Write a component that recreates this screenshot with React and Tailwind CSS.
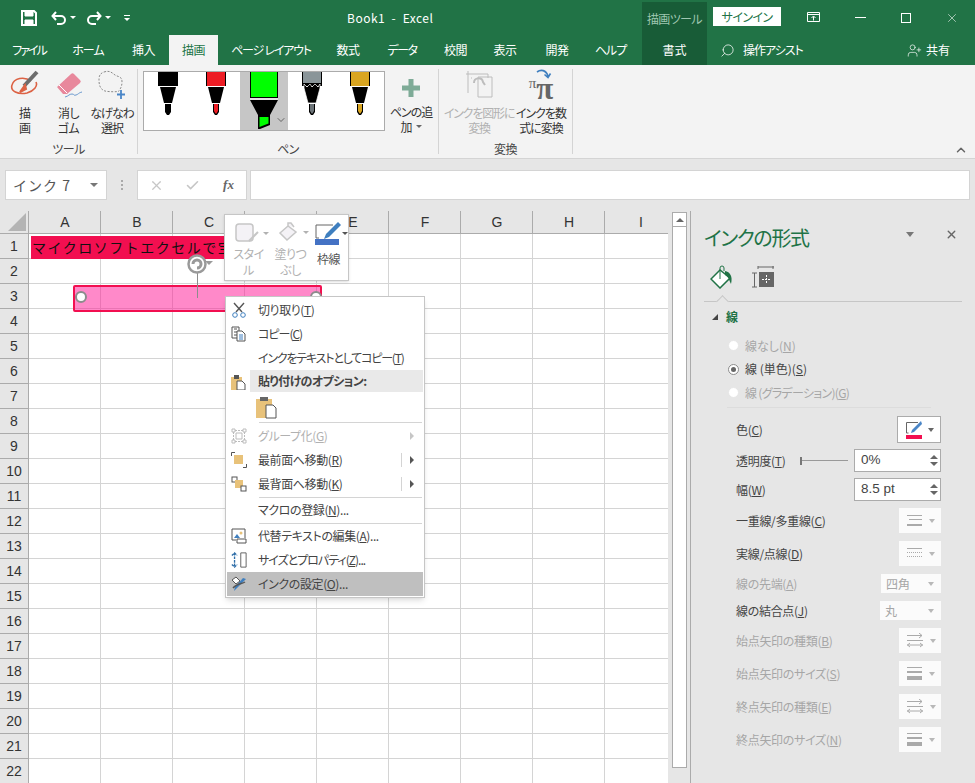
import React from 'react';
import { ChevronDown, ChevronUp, Search, UserPlus, X, Check } from 'lucide-react';

const cols = ['A', 'B', 'C', 'D', 'E', 'F', 'G', 'H', 'I'];
const rows = Array.from({ length: 22 }, (_, i) => i + 1);

const tabs = [
  ['ファイル', 'w-[58px] tracking-[-2px]'], ['ホーム', 'w-[60px] tracking-[-1px]'], ['挿入', 'w-[51px] tracking-[-0.5px]'], ['描画', 'w-[49px] tracking-[-0.5px] bg-[#f3f3f3] text-[#217346]'],
  ['ページ レイアウト', 'w-[106px] tracking-[-1.2px]'], ['数式', 'w-[48px] tracking-[-0.5px]'], ['データ', 'w-[60px] tracking-[-1.5px]'], ['校閲', 'w-[47px] tracking-[-0.5px]'],
  ['表示', 'w-[52px] tracking-[-0.5px]'], ['開発', 'w-[52px] tracking-[-0.5px]'], ['ヘルプ', 'w-[59px] pr-[4px] tracking-[-1px]'], ['書式', 'w-[65px] bg-[#185c37]'],
];

function Tri({ className = '' }) {
  return <span className={`inline-block w-0 h-0 border-x-[3px] border-x-transparent border-t-[3px] ${className}`} />;
}

function TitleBar() {
  return (
    <div className="h-[35px] flex bg-[#217346] text-white">
      <div className="w-[342px] flex items-center pl-[21px] gap-[10px]">
        <svg width="16" height="16" viewBox="0 0 16 16" fill="none" stroke="#fff" strokeWidth="2" className="mr-[4px]">
          <path d="M1 1h12l2 2v12H1z" /><path d="M4 1v5h8V1M4 15v-5h8v5" fill="#fff" strokeWidth="1" />
        </svg>
        <span className="flex items-center gap-[3px]">
          <svg width="16" height="14" viewBox="0 0 16 14" fill="none" stroke="#fff" strokeWidth="2">
            <path d="M2 5h8a4 4 0 0 1 0 8H6M5 1 1.500 5 5 9" />
          </svg>
          <Tri className="border-t-white" />
        </span>
        <span className="flex items-center gap-[3px]">
          <svg width="16" height="14" viewBox="0 0 16 14" fill="none" stroke="#fff" strokeWidth="2">
            <path d="M14 5H6a4 4 0 0 0 0 8h4M11 1l3.500 4L11 9" />
          </svg>
          <Tri className="border-t-white" />
        </span>
        <span className="flex flex-col items-center gap-[2px] ml-[3px]">
          <span className="w-[6px] h-px bg-white" /><Tri className="border-t-white" />
        </span>
      </div>
      <div className="w-[300px] flex items-center text-[12px] pl-[5px] tracking-[0.5px] whitespace-pre">Book1  -  Excel</div>
      <div className="w-[65px] mt-[2px] bg-[#185c37] text-[#9fc7b0] text-[12px] tracking-[-0.6px] flex items-center justify-center">描画ツール</div>
      <div className="w-[68px] h-[19px] mt-[7px] ml-[6px] bg-white text-[#217346] text-[12px] tracking-[-0.6px] flex items-center justify-center">サインイン</div>
      <div className="flex-1 flex items-center justify-end">
        <span className="w-[46px] flex justify-center">
          <svg width="14" height="11" viewBox="0 0 14 11" fill="none" stroke="#fff"><path d="M.5 .5h12v9H.5zM.5 2.500h12M6.500 8.500V4.500M4.500 6l2-2 2 2" /></svg>
        </span>
        <span className="w-[46px] flex justify-center"><span className="w-[11px] h-px bg-white" /></span>
        <span className="w-[46px] flex justify-center"><span className="w-[10px] h-[10px] border border-white" /></span>
        <span className="w-[46px] flex justify-center"><X size={14} strokeWidth={1} /></span>
      </div>
    </div>
  );
}

function TabBar() {
  return (
    <div className="h-[30px] flex bg-[#217346] text-white text-[12px]">
      {tabs.map(([label, cls]) => (
        <div key={label} className={`flex items-center justify-center whitespace-pre ${cls}`}>{label}</div>
      ))}
      <div className="flex items-center ml-[13px] gap-[8px]">
        <Search size={15} strokeWidth={1.2} className="-scale-x-100" />
        <span className="tracking-[-1px]">操作アシスト</span>
      </div>
      <div className="flex items-center ml-auto mr-[3px] gap-[4px] w-[65px]">
        <UserPlus size={15} strokeWidth={1.1} />
        <span>共有</span>
      </div>
    </div>
  );
}

function Pen({ body, tip, w = 18, selected, jag }) {
  return (
    <div className={`w-[48px] h-[58px] relative flex justify-center ${selected ? 'bg-[#c6c6c6]' : ''}`}>
      <svg width="30" height="58" viewBox="0 0 30 58">
        <rect x={15 - w / 2 - 1} y="0" width={w + 2} height="14" fill="#000" />
        <rect x={15 - w / 2} y="0" width={w} height={jag ? 11 : 14} fill={body} />
        {selected ? (
          <>
            <path d="M1 28h28l-8 15v2H9v-2z" fill="#000" />
            <path d="M1 27h28" stroke="#fff" />
            <rect x="1" y="0" width="28" height="26" fill="#000" />
            <rect x="2" y="0" width="26" height="25" fill={body} />
            <path d="M9 45h12v8l-10 4H9z" fill="#000" />
            <path d="M10.500 45h9v6.500l-9 3.500z" fill={tip} />
          </>
        ) : (
          <>
            {jag ? (
              <path d="M7 12l3 3 3-3 2 3 3-3 3 3 2-3v4l-4 15h-8L7 16z" fill="#000" stroke="#fff" strokeWidth=".7" />
            ) : (
              <>
                <path d="M6 14.500h18" stroke="#fff" />
                <path d="M7 15h16l-4 16h-8z" fill="#000" />
              </>
            )}
            <path d="M12 32h6v8l-2 3h-2l-2-3z" fill="#000" />
            <path d="M13 32h4v7l-1.500 2.500h-1L13 39z" fill={tip} />
          </>
        )}
      </svg>
      {selected && <ChevronDown size={12} strokeWidth={1.5} className="absolute right-[1px] bottom-[4px] text-[#444]" />}
    </div>
  );
}

function GroupLabel({ children }) {
  return <div className="h-[14px] text-center text-[12px] leading-[17px] text-[#444] tracking-[-0.5px]">{children}</div>;
}

function Ribbon() {
  return (
    <div className="h-[94px] bg-[#f3f3f3] border-b border-[#d4d4d4] flex text-[12px] leading-[15px] text-[#333]">
      <div className="w-[138px] border-r border-[#d4d4d4] my-[4px] flex flex-col">
        <div className="flex-1 flex text-center">
          <div className="w-[50px] flex flex-col items-center">
            <svg width="30" height="34" viewBox="0 0 30 34" fill="none">
              <path d="M21 12C14 7 4 9 2 16c-2 6 6 10 15 8 7-2 11-7 9-11" stroke="#dc6244" strokeWidth="1.600" />
              <path d="M27 3 14 17" stroke="#6c6c6c" strokeWidth="4" /><path d="M15 16l-5 7 6-3z" fill="#dc6244" stroke="#dc6244" strokeWidth="2" />
            </svg>
            <span className="mt-[2px]">描<br />画</span>
          </div>
          <div className="w-[37px] flex flex-col items-center">
            <svg width="30" height="34" viewBox="0 0 30 34" fill="none">
              <path d="M3 18 17 5a2 2 0 0 1 3 0l6 6a2 2 0 0 1 0 3L13 25H9z" fill="#e8889c" />
              <path d="M5 16l8 8" stroke="#fff" /><path d="M11 28c4-1 4-3 7-3s1 2 4 1 2-2 6-3" stroke="#5b8ec9" strokeWidth=".9" />
            </svg>
            <span className="mt-[2px] tracking-[-0.5px]">消し<br />ゴム</span>
          </div>
          <div className="w-[50px] flex flex-col items-center">
            <svg width="30" height="34" viewBox="0 0 30 34" fill="none">
              <path d="M7 3c6-2 8 1 11 3s7 1 7 7-3 8-3 9-10 1-14 0C2 20 2 14 2 10s2-6 5-7z" stroke="#8a8a8a" strokeDasharray="2 1.500" />
              <path d="M24 21v9M20 25.500h8" stroke="#4a86c7" strokeWidth="1.800" />
            </svg>
            <span className="mt-[2px] whitespace-nowrap tracking-[-1px]">なげなわ<br />選択</span>
          </div>
        </div>
        <GroupLabel>ツール</GroupLabel>
      </div>
      <div className="w-[301px] border-r border-[#d4d4d4] my-[4px] flex flex-col">
        <div className="flex-1 flex">
          <div className="w-[242px] h-[60px] ml-[5px] mt-[2px] border border-[#ababab] bg-white flex">
            <Pen body="#000" tip="#000" />
            <Pen body="#ed1c24" tip="#ed1c24" />
            <Pen body="#00ff00" tip="#00ff00" selected />
            <Pen body="#8a9599" tip="#6c7478" jag />
            <Pen body="#d9a520" tip="#d9a520" />
          </div>
          <div className="w-[46px] ml-[3px] flex flex-col items-center text-center">
            <svg width="18" height="18" viewBox="0 0 18 18" className="mt-[10px] mb-[7px]">
              <path d="M6.500 0h5v6.500H18v5h-6.500V18h-5v-6.500H0v-5h6.500z" fill="#7eab97" />
            </svg>
            <span className="whitespace-nowrap tracking-[-1px]">ペンの追</span>
            <span className="flex items-center gap-[3px]">加<Tri className="border-t-[#666]" /></span>
          </div>
        </div>
        <GroupLabel>ペン</GroupLabel>
      </div>
      <div className="w-[134px] border-r border-[#d4d4d4] my-[4px] flex flex-col">
        <div className="flex-1 flex text-center">
          <div className="w-[80px] flex flex-col items-center text-[#b1b1b1]">
            <svg width="30" height="34" viewBox="0 0 30 34" fill="none" stroke="#bdbdbd">
              <path d="M2 5h22v4M4 2v22M8 9h-1M14 8h14v20H14z" />
              <path d="M10 14c0-6 8-6 9-1l2 3" strokeWidth="2" />
            </svg>
            <span className="mt-[2px] whitespace-nowrap tracking-[-1.200px]">インクを図形に<br />変換</span>
          </div>
          <div className="w-[44px] flex flex-col items-center">
            <div className="h-[34px] flex items-end text-[#666] font-['Liberation_Serif',serif] leading-none relative">
              <span className="text-[15px] mb-[12px]">π</span><span className="text-[31px] font-bold -mb-[1px]">π</span>
              <svg width="16" height="10" viewBox="0 0 16 10" fill="none" stroke="#3f7fbf" strokeWidth="1.600" className="absolute top-0 right-[1px]">
                <path d="M1 3c4-3 9-2 11 4M8.500 5.500 12 8.500l2.500-4" />
              </svg>
            </div>
            <span className="mt-[2px] whitespace-nowrap tracking-[-1px]">インクを数<br />式に変換</span>
          </div>
        </div>
        <GroupLabel>変換</GroupLabel>
      </div>
      <div className="flex-1 flex items-end justify-end pb-[1px] pr-[7px]">
        <ChevronUp size={14} strokeWidth={2.5} className="text-[#666]" />
      </div>
    </div>
  );
}

function FormulaBar() {
  return (
    <div className="h-[52px] bg-[#e6e6e6] flex pt-[11px] pl-[5px] pr-[5px]">
      <div className="w-[102px] h-[30px] bg-white border border-[#d4d4d4] flex items-center pl-[7px] pr-[8px] text-[14px] tracking-[1px] text-[#555] [font-feature-settings:normal]">
        <span className="flex-1">インク 7</span><Tri className="border-x-[4px] border-t-[4px] border-t-[#777]" />
      </div>
      <div className="w-[30px] h-[30px] flex items-center justify-center">
        <span className="flex flex-col gap-[2px]">
          <span className="w-[2px] h-[2px] bg-[#aaa]" /><span className="w-[2px] h-[2px] bg-[#aaa]" /><span className="w-[2px] h-[2px] bg-[#aaa]" />
        </span>
      </div>
      <div className="w-[110px] h-[30px] bg-white border border-[#d4d4d4] flex items-center">
        <span className="w-[36px] flex justify-center"><X size={15} strokeWidth={2} className="text-[#c6c6c6]" /></span>
        <span className="w-[37px] flex justify-center"><Check size={15} strokeWidth={2.500} className="text-[#c6c6c6]" /></span>
        <span className="w-[35px] text-center text-[13px] italic font-bold text-[#666] font-['Liberation_Serif',serif]">fx</span>
      </div>
      <div className="flex-1 h-[30px] ml-[3px] bg-white border border-[#d4d4d4]" />
    </div>
  );
}

function Sheet() {
  return (
    <div className="w-[668px] h-full overflow-hidden bg-white text-[14px] text-[#333] font-['Liberation_Sans','Noto_Sans_CJK_JP',sans-serif]">
      <div className="flex h-[23px] bg-[#e6e6e6] border-b border-[#ababab]">
        <div className="w-[29px] shrink-0 border-r border-[#ababab] flex items-end justify-end p-[2px]">
          <svg width="18" height="18" viewBox="0 0 18 18"><path d="M18 0v18H0z" fill="#b4b4b4" /></svg>
        </div>
        {cols.map(c => (
          <div key={c} className="w-[72px] shrink-0 border-r border-[#ababab] flex items-center justify-center pl-[1px]">{c}</div>
        ))}
      </div>
      {rows.map(r => (
        <div key={r} className="flex h-[25px]">
          <div className="w-[29px] shrink-0 bg-[#e6e6e6] border-r border-b border-[#ababab] flex items-center justify-center">{r}</div>
          {cols.map(c => <div key={c} className="w-[72px] shrink-0 border-r border-b border-[#d4d4d4]" />)}
        </div>
      ))}
    </div>
  );
}

function InkShapes() {
  return (
    <>
      <div className="absolute left-[31px] top-[25px] w-[215px] h-[23px] bg-[#f20f50] text-[14px] leading-[22px] tracking-[1.500px] whitespace-nowrap text-[#111] pl-[1px] [font-feature-settings:normal]">
        マイクロソフトエクセルで宝
      </div>
      <div className="absolute left-[73px] top-[74px] w-[249px] h-[27px] bg-[#ff1493]/50 border-2 border-[#f20f50] rounded-[2px]" />
      <div className="absolute left-[75px] top-[80px] w-[12px] h-[12px] rounded-full bg-white border-2 border-[#8c8c8c]" />
      <div className="absolute left-[310px] top-[80px] w-[12px] h-[12px] rounded-full bg-white border-2 border-[#8c8c8c]" />
      <div className="absolute left-[197px] top-[62px] w-px h-[25px] bg-[#8c8c8c]" />
      <svg className="absolute left-[187px] top-[43px]" width="27" height="20" viewBox="0 0 27 20" fill="none" stroke="#9a9a9a" strokeWidth="2.500">
        <circle cx="10" cy="10" r="8.500" fill="#fff" /><path d="M6 10a4 4 0 1 1 4 4" strokeWidth="3" />
        <path d="M18 7l4 4 4-4" fill="#9a9a9a" stroke="none" />
      </svg>
    </>
  );
}

function MiniToolbar() {
  return (
    <div className="absolute left-[224px] top-[3px] w-[125px] h-[67px] bg-white border border-[#c6c6c6] shadow-sm flex text-[12px] leading-[16px] text-center tracking-[-0.5px]">
      <div className="w-[50px] flex flex-col items-center pt-[8px] text-[#b1b1b1]">
        <span className="flex items-center gap-[1px] ml-[6px]">
          <svg width="27" height="20" viewBox="0 0 27 20" fill="#f4f2f6" stroke="#c6c6c6"><rect x="1" y="1" width="17" height="17" rx="3" strokeWidth="1.500" /><path d="M14 18l9-9" strokeWidth="2" /></svg>
          <Tri className="border-t-[#b1b1b1]" />
        </span>
        <span className="mt-[3px]">スタイ<br />ル</span>
      </div>
      <div className="w-[37px] flex flex-col items-center pt-[6px] text-[#b1b1b1]">
        <span className="flex items-center gap-[1px] ml-[6px]">
          <svg width="24" height="22" viewBox="0 0 24 22" fill="#f4f2f6" stroke="#c6c6c6" strokeWidth="1.500"><path d="M10 5 2 12l7 7 9-8zM10 5V2h3l3 4" /></svg>
          <Tri className="border-t-[#b1b1b1]" />
        </span>
        <span className="mt-[3px] whitespace-nowrap">塗りつ<br />ぶし</span>
      </div>
      <div className="flex-1 flex flex-col items-center pt-[6px] text-[#555]">
        <span className="flex items-center gap-[1px] ml-[6px]">
          <svg width="26" height="24" viewBox="0 0 26 24" fill="none">
            <path d="M1 17V4h17M1 17h3" stroke="#666" /><path d="M23 1 11 13l-2 5 5-2L26 4z" fill="#3f7fbf" />
            <rect x="0" y="18" width="24" height="6" fill="#4472c4" />
          </svg>
          <Tri className="border-t-[#555]" />
        </span>
        <span className="mt-[6px]">枠線</span>
      </div>
    </div>
  );
}

const ic = { fill: 'none', width: 16, height: 16, viewBox: '0 0 16 16' };

function MenuIcon({ name }) {
  switch (name) {
    case 'cut':
      return <svg {...ic} stroke="#555"><path d="M3 1l8 9M13 1 5 10" strokeWidth="1.400" /><circle cx="4" cy="13" r="2.300" stroke="#3f7fbf" /><circle cx="12" cy="13" r="2.300" stroke="#3f7fbf" /></svg>;
    case 'copy':
      return <svg {...ic} stroke="#555"><path d="M1 1h7v11H1z" /><path d="M3 3h3M3 6h3M3 9h3M6 5h5l3 3v7H6z" fill="#fff" /><path d="M8 9h4M8 11h4M8 13h4" stroke="#3f7fbf" /></svg>;
    case 'paste':
      return <svg {...ic}><path d="M1 3h11v13H1z" fill="#e8c27a" /><path d="M4 1h5v4H4z" fill="#555" /><path d="M7 7h5l3 3v6H7z" fill="#fff" stroke="#555" /></svg>;
    case 'group':
      return <svg {...ic} stroke="#bcbcbc"><path d="M1 1h3v3H1zM12 1h3v3h-3zM1 12h3v3H1zM12 12h3v3h-3zM5 5h6v6H5z" /><path d="M4 2.500h8M4 13.500h8M2.500 4v8M13.500 4v8" strokeDasharray="2 1" /></svg>;
    case 'front':
      return <svg {...ic}><rect x="3" y="3" width="9" height="9" fill="#e8c27a" /><path d="M.5 4V.5H4M15.500 12v3.500H12" stroke="#555" /></svg>;
    case 'back':
      return <svg {...ic}><rect x="1" y="1" width="5" height="5" fill="#fff" stroke="#555" /><rect x="4" y="4" width="8" height="8" fill="#e8c27a" /><rect x="10" y="10" width="5" height="5" fill="#fff" stroke="#555" /></svg>;
    case 'alt':
      return <svg {...ic} stroke="#555"><path d="M1 1h13v9" /><path d="M1 1v11h4" /><path d="M3 10l3-4 3 4z" fill="#3f7fbf" stroke="none" /><circle cx="10" cy="5" r="1.500" fill="#e8c27a" stroke="none" /><path d="M6 11h9v4H6z" fill="#fff" /></svg>;
    case 'size':
      return <svg {...ic} viewBox="0 0 18 18" width="16" height="16"><path d="M4 1v16M1 4l3-3 3 3M1 14l3 3 3-3" stroke="#2f6ea8" strokeWidth="1.500" strokeDasharray="3 1" /><path d="M11 1h6v16h-6z" stroke="#555" /></svg>;
    case 'ink':
      return <svg {...ic}><path d="M1 4l4-3 4 4-4 3z" fill="#fff" stroke="#555" /><path d="M15 3 6 12l-3 3 1-4 8-9z" fill="#3f7fbf" /><path d="M2 12c4-5 9-4 12-6" stroke="#555" strokeWidth="1.500" /></svg>;
    default:
      return null;
  }
}

function MenuItem({ icon, children, disabled, active, arrow, split, tight }) {
  return (
    <div className={`h-[24px] flex items-center ${active ? 'bg-[#bfbfbf] mx-px' : ''} ${disabled ? 'text-[#b1b1b1]' : 'text-[#444]'}`}>
      <span className={`w-[25px] mr-[7px] flex justify-center shrink-0 ${active ? '-ml-px' : ''}`}>{icon && <MenuIcon name={icon} />}</span>
      <span className={`flex-1 whitespace-nowrap ${tight || 'tracking-[-0.4px]'}`}>{children}</span>
      {split && <span className="w-px h-[14px] bg-[#d4d4d4] mr-[8px]" />}
      {arrow && <span className={`w-0 h-0 mr-[10px] border-y-[4px] border-y-transparent border-l-[4px] ${disabled ? 'border-l-[#c6c6c6]' : 'border-l-[#555]'}`} />}
    </div>
  );
}

function Sep({ className = 'my-[0.5px]' }) {
  return <div className={`h-px ml-[33px] mr-[2px] bg-[#d4d4d4] ${className}`} />;
}

function ContextMenu() {
  return (
    <div className="absolute left-[225px] top-[85px] w-[200px] h-[302px] py-[1px] bg-white border border-[#c6c6c6] shadow-md text-[12px]">
      <MenuItem icon="cut">切り取り(<u>T</u>)</MenuItem>
      <MenuItem icon="copy" tight="tracking-[-1px]">コピー(<u>C</u>)</MenuItem>
      <MenuItem tight="tracking-[-1.200px]">インクをテキストとしてコピー(<u>T</u>)</MenuItem>
      <div className="h-[22px] flex items-center">
        <span className="w-[24px] flex justify-center shrink-0 mt-[1px]"><MenuIcon name="paste" /></span>
        <span className="flex-1 h-full mr-px pl-[8px] bg-[#e9e9e9] flex items-center font-bold text-[#444] tracking-[-0.6px]">貼り付けのオプション:</span>
      </div>
      <div className="h-[29px] pl-[30px] flex items-center">
        <svg width="21" height="24" viewBox="0 0 21 24" fill="none">
          <path d="M0 4h16v19H0z" fill="#e8c27a" /><path d="M4 2h8v4H4z" fill="#666" /><path d="M10 10h7l3 3v10H10z" fill="#fff" stroke="#555" />
        </svg>
      </div>
      <Sep className="my-[1px]" />
      <MenuItem icon="group" disabled arrow>グループ化(<u>G</u>)</MenuItem>
      <MenuItem icon="front" arrow split>最前面へ移動(<u>R</u>)</MenuItem>
      <MenuItem icon="back" arrow split>最背面へ移動(<u>K</u>)</MenuItem>
      <Sep />
      <MenuItem>マクロの登録(<u>N</u>)...</MenuItem>
      <Sep />
      <MenuItem icon="alt">代替テキストの編集(<u>A</u>)...</MenuItem>
      <MenuItem icon="size" tight="tracking-[-1px]">サイズとプロパティ(<u>Z</u>)...</MenuItem>
      <MenuItem icon="ink" active>インクの設定(<u>O</u>)...</MenuItem>
    </div>
  );
}

function Scrollbar() {
  return (
    <div className="w-[22px] shrink-0 bg-[#e6e6e6] flex flex-col pl-[4px] pr-[3px] pt-px">
      <div className="h-[15px] bg-white border border-[#ababab] flex items-center justify-center">
        <span className="w-0 h-0 border-x-[4px] border-x-transparent border-b-[4px] border-b-[#666]" />
      </div>
      <div className="h-[542px] -mt-px bg-white border border-[#ababab]" />
    </div>
  );
}

function Radio({ checked, disabled, children, tight = '' }) {
  return (
    <div className={`h-[23.500px] flex items-center ${disabled ? 'text-[#a6a6a6]' : 'text-[#444]'}`}>
      <span className={`w-[11px] h-[11px] rounded-full bg-white border mr-[6px] flex items-center justify-center ${disabled ? 'border-[#e6e6e6]' : 'border-[#8c8c8c]'}`}>
        {checked && <span className="w-[5px] h-[5px] rounded-full bg-[#666]" />}
      </span>
      <span className={tight}>{children}</span>
    </div>
  );
}

function Spin({ value }) {
  return (
    <div className="w-[87px] h-[23px] bg-white border border-[#ababab] flex items-center pl-[6px] pr-[2px] text-[#444] text-[13.5px] font-['Liberation_Sans',sans-serif]">
      <span className="flex-1">{value}</span>
      <span className="flex flex-col gap-[3px]">
        <span className="w-0 h-0 border-x-[4px] border-x-transparent border-b-[4px] border-b-[#666]" />
        <span className="w-0 h-0 border-x-[4px] border-x-transparent border-t-[4px] border-t-[#666]" />
      </span>
    </div>
  );
}

function LineGlyph({ type }) {
  if (type === 'compound') {
    return <svg width="15" height="12" viewBox="0 0 15 12" fill="#aaa"><rect y="0" width="15" height="1" /><rect y="4" x="2" width="13" height="1" /><rect y="9" width="15" height="2" /></svg>;
  }
  if (type === 'dash') {
    return <svg width="15" height="12" viewBox="0 0 15 12" stroke="#aaa" strokeWidth="1"><path d="M0 .5h15" /><path d="M0 4.500h15M0 8.500h15" strokeDasharray="1 1" /></svg>;
  }
  if (type === 'arrow') {
    return <svg width="16" height="15" viewBox="0 0 16 15" fill="none" stroke="#aaa"><path d="M0 2.500h15M12 0l3 2.500L12 5M0 7.500h16M0 12h16M3 10 .5 12 3 14M13 10l2.500 2-2.500 2" /></svg>;
  }
  return <svg width="15" height="13" viewBox="0 0 15 13" fill="#aaa"><rect width="15" height="1" /><rect y="4" width="15" height="2" /><rect y="9" width="15" height="4" /></svg>;
}

function IconDrop({ type }) {
  return (
    <div className="w-[42px] h-[25px] bg-[#fbfbfb] flex items-center pl-[8px] gap-[7px]">
      <LineGlyph type={type} />
      <Tri className="border-x-[3.500px] border-t-[4px] border-t-[#b8b8b8]" />
    </div>
  );
}

function TextDrop({ value, w }) {
  return (
    <div className={`h-[19px] bg-[#fbfbfb] flex items-center pl-[5px] pr-[7px] text-[#a6a6a6] ${w}`}>
      <span className="flex-1">{value}</span>
      <Tri className="border-x-[3.500px] border-t-[4px] border-t-[#b8b8b8]" />
    </div>
  );
}

function PanelRow({ label, dim, children, h, mt }) {
  return (
    <div className={`flex items-center justify-between ${h} ${mt} ${dim ? 'text-[#a6a6a6]' : 'text-[#444]'}`}>
      <span className="whitespace-nowrap tracking-[-0.3px]">{label}</span>
      {children}
    </div>
  );
}

function FormatPanel() {
  return (
    <div className="flex-1 border-l border-[#ababab] bg-[#e6e6e6] text-[12px] flex flex-col">
      <div className="h-[49px] pt-[5px] pl-[13px] pr-[17px] flex items-center justify-between text-[#217346]">
        <span className="text-[20px] tracking-[-1.300px]">インクの形式</span>
        <span className="flex items-center gap-[31px] text-[#666] -mt-[7px]">
          <Tri className="border-x-[4.500px] border-t-[5px] border-t-[#777]" />
          <X size={13} strokeWidth={2.500} />
        </span>
      </div>
      <div className="h-[33px] pl-[19px] flex items-center gap-[18px]">
        <svg width="24" height="24" viewBox="0 0 24 24" fill="none">
          <path d="M10 5 1 14l9 9 10-10z" fill="#fff" stroke="#217346" strokeWidth="1.500" />
          <path d="M10 14V3a2 2 0 0 1 4 0v3" stroke="#217346" /><path d="M15 6c5 1 8 5 6 13-2-4-2-7-6-9z" fill="#217346" />
        </svg>
        <svg width="22" height="22" viewBox="0 0 22 22" fill="none">
          <path d="M6 1h16M6 0v3M21 0v3M0 7h5M0 21h5M2.500 7v14" stroke="#666" />
          <rect x="7" y="6" width="15" height="15" fill="#666" />
          <path d="M14.500 9v9M10 13.500h9" stroke="#fff" strokeDasharray="2 1" />
        </svg>
      </div>
      <div className="relative h-[9px] mx-[13px] border-b border-[#c6c6c6]">
        <span className="absolute left-[14px] top-[4px] w-[9px] h-[9px] bg-[#e6e6e6] border-l border-t border-[#c6c6c6] rotate-45" />
      </div>
      <div className="h-[29px] pl-[21px] flex items-center gap-[8px] font-bold text-[#217346]">
        <svg width="6" height="6" viewBox="0 0 6 6"><path d="M6 0v6H0z" fill="#444" /></svg>
        線
      </div>
      <div className="pl-[37px] pt-[3px] h-[76px]">
        <Radio disabled>線なし(<u>N</u>)</Radio>
        <Radio checked>線 (単色)(<u>S</u>)</Radio>
        <Radio disabled tight="tracking-[-0.7px]">線 (グラデーション)(<u>G</u>)</Radio>
      </div>
      <div className="h-px ml-[36px] mr-[44px] bg-[#dcdcdc]" />
      <div className="pl-[45px] pr-[34px] mt-[8px]">
        <PanelRow label={<>色(<u>C</u>)</>} h="h-[27px]">
          <div className="w-[44px] h-[27px] bg-white border border-[#ababab] flex items-center pl-[8px] gap-[6px]">
            <svg width="16" height="19" viewBox="0 0 16 19" fill="none">
              <path d="M.5 13V2.500H12M.5 13h2" stroke="#666" /><path d="M15 1 6 10l-1 3 3-1 8-8z" fill="#4a86c7" />
              <rect y="15" width="16" height="4" fill="#f20f50" />
            </svg>
            <Tri className="border-x-[3.500px] border-t-[4px] border-t-[#666]" />
          </div>
        </PanelRow>
        <PanelRow label={<>透明度(<u>T</u>)</>} h="h-[23px]" mt="mt-[6px]">
          <div className="flex items-center">
            <span className="w-[2px] h-[8px] bg-[#777]" />
            <span className="w-[46px] h-px bg-[#999] mr-[6px]" />
            <Spin value="0%" />
          </div>
        </PanelRow>
        <PanelRow label={<>幅(<u>W</u>)</>} h="h-[23px]" mt="mt-[6px]"><Spin value="8.5 pt" /></PanelRow>
        <PanelRow label={<>一重線/多重線(<u>C</u>)</>} h="h-[25px]" mt="mt-[7px]"><IconDrop type="compound" /></PanelRow>
        <PanelRow label={<>実線/点線(<u>D</u>)</>} h="h-[25px]" mt="mt-[8px]"><IconDrop type="dash" /></PanelRow>
        <PanelRow dim label={<>線の先端(<u>A</u>)</>} h="h-[19px]" mt="mt-[8px]"><TextDrop value="四角" w="w-[60px]" /></PanelRow>
        <PanelRow label={<>線の結合点(<u>J</u>)</>} h="h-[19px]" mt="mt-[8px]"><TextDrop value="丸" w="w-[61px]" /></PanelRow>
        <PanelRow dim label={<>始点矢印の種類(<u>B</u>)</>} h="h-[25px]" mt="mt-[8px]"><IconDrop type="arrow" /></PanelRow>
        <PanelRow dim label={<>始点矢印のサイズ(<u>S</u>)</>} h="h-[25px]" mt="mt-[8px]"><IconDrop type="size" /></PanelRow>
        <PanelRow dim label={<>終点矢印の種類(<u>E</u>)</>} h="h-[25px]" mt="mt-[8px]"><IconDrop type="arrow" /></PanelRow>
        <PanelRow dim label={<>終点矢印のサイズ(<u>N</u>)</>} h="h-[25px]" mt="mt-[8px]"><IconDrop type="size" /></PanelRow>
      </div>
    </div>
  );
}

export default function App() {
  return (
    <div className="w-[975px] h-[783px] overflow-hidden flex flex-col bg-[#e6e6e6] font-['Noto_Sans_CJK_JP',sans-serif] [font-feature-settings:'palt']">
      <TitleBar />
      <TabBar />
      <Ribbon />
      <FormulaBar />
      <div className="flex-1 flex min-h-0 relative">
        <Sheet />
        <Scrollbar />
        <FormatPanel />
        <InkShapes />
        <MiniToolbar />
        <ContextMenu />
      </div>
    </div>
  );
}
